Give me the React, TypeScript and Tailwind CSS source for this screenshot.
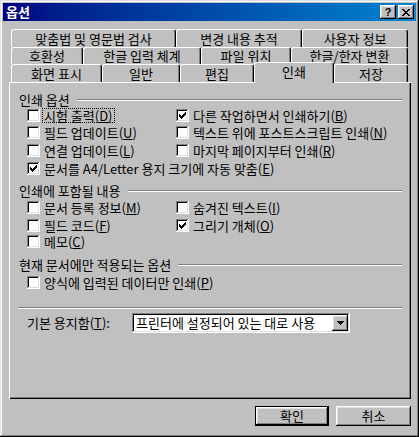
import React from "react"

const raised =
  "shadow-[inset_-1px_-1px_0_#000,inset_1px_1px_0_#fff,inset_-2px_-2px_0_#808080,inset_2px_2px_0_#dfdfdf]"
const sunken =
  "shadow-[inset_-1px_-1px_0_#fff,inset_1px_1px_0_#808080,inset_-2px_-2px_0_#dfdfdf,inset_2px_2px_0_#000]"

function CheckMark() {
  return (
    <svg width="7" height="7" viewBox="0 0 7 7" shapeRendering="crispEdges">
      <path
        d="M6 0h1v1h-1z M5 1h2v1h-2z M0 2h1v1h-1z M4 2h3v1h-3z M0 3h2v1h-2z M3 3h3v1h-3z M0 4h5v1h-5z M1 5h3v1h-3z M2 6h1v1h-1z"
        fill="#000"
      />
    </svg>
  )
}

function Box({ checked }: { checked?: boolean }) {
  return (
    <div className={`w-[13px] h-[13px] shrink-0 bg-white flex items-center justify-center ${sunken}`}>
      {checked && <CheckMark />}
    </div>
  )
}

// mnemonic letter
function M({ c }: { c: string }) {
  return <span className="underline underline-offset-[1px]">{c}</span>
}

function Option({
  checked,
  focus,
  children
}: {
  checked?: boolean
  focus?: boolean
  children: React.ReactNode
}) {
  return (
    <div className="flex items-center h-[13px]">
      <Box checked={checked} />
      <span
        className={`ml-[2px] px-[1px] h-[15px] leading-[13px] whitespace-nowrap border ${
          focus ? "border-dotted border-black" : "border-transparent"
        }`}
      >
        {children}
      </span>
    </div>
  )
}

function Group({ title }: { title: string }) {
  return (
    <div className="flex items-center h-[14px]">
      <span className="whitespace-nowrap leading-[14px]">{title}</span>
      <div className="flex-1 ml-[7px] h-[2px] border-t border-t-[#808080] border-b border-b-white" />
    </div>
  )
}

const tabBase =
  "h-[18px] shrink-0 flex items-center justify-center whitespace-nowrap border-l border-t border-r border-l-white border-t-white border-r-black rounded-t-[3px] shadow-[inset_-1px_0_0_#808080]"

export default function App() {
  return (
    <div className="w-[419px] h-[437px] bg-[#c0c0c0] p-[3px] flex flex-col text-[13px] text-black font-['Noto_Sans_CJK_KR','Noto_Sans',sans-serif] shadow-[inset_-1px_-1px_0_#000,inset_1px_1px_0_#dfdfdf,inset_-2px_-2px_0_#808080,inset_2px_2px_0_#fff]">

      {/* Title bar */}

      <div className="h-[18px] flex items-center pl-[3px] pr-[2px] bg-linear-to-r from-[#000080] to-[#1084d0]">
        <span className="text-white font-bold">옵션</span>
        <div className="ml-auto flex gap-[2px]">
          <div className={`w-[16px] h-[14px] bg-[#c0c0c0] flex items-center justify-center ${raised}`}>
            <span className="font-bold text-[11px] leading-none font-['Liberation_Sans',sans-serif]">?</span>
          </div>
          <div className={`w-[16px] h-[14px] bg-[#c0c0c0] flex items-center justify-center ${raised}`}>
            <svg width="8" height="7" viewBox="0 0 8 7" shapeRendering="crispEdges">
              <path
                d="M0 0h2v1h-2z M6 0h2v1h-2z M1 1h2v1h-2z M5 1h2v1h-2z M2 2h4v1h-4z M3 3h2v1h-2z M2 4h4v1h-4z M1 5h2v1h-2z M5 5h2v1h-2z M0 6h2v1h-2z M6 6h2v1h-2z"
                fill="#000"
              />
            </svg>
          </div>
        </div>
      </div>

      {/* Body */}

      <div className="pl-[6px] pr-[5px] pt-[8px]">

        {/* Tabs */}

        <div className="pl-[2px] pr-[3px] flex flex-col">
          <div className="flex">
            <div className={`${tabBase} w-[165px]`}>맞춤법 및 영문법 검사</div>
            <div className={`${tabBase} w-[126px]`}>변경 내용 추적</div>
            <div className={`${tabBase} w-[106px]`}>사용자 정보</div>
          </div>
          <div className="flex">
            <div className={`${tabBase} !h-[17px] w-[72px]`}>호환성</div>
            <div className={`${tabBase} !h-[17px] w-[118px]`}>한글 입력 체계</div>
            <div className={`${tabBase} !h-[17px] w-[90px]`}>파일 위치</div>
            <div className={`${tabBase} !h-[17px] w-[117px]`}>한글/한자 변환</div>
          </div>
          <div className="flex items-end">
            <div className={`${tabBase} w-[91px]`}>화면 표시</div>
            <div className={`${tabBase} w-[78px]`}>일반</div>
            <div className={`${tabBase} w-[74px]`}>편집</div>
            <div className={`${tabBase} relative z-10 bg-[#c0c0c0] !h-[21px] -mt-[2px] -mb-[1px] pb-[2px] w-[80px]`}>인쇄</div>
            <div className={`${tabBase} w-[74px]`}>저장</div>
          </div>
        </div>

        {/* Panel */}

        <div className="h-[317px] pl-[10px] pr-[9px] pt-[11px] flex flex-col shadow-[inset_1px_1px_0_#fff,inset_-1px_-1px_0_#000,inset_-2px_-2px_0_#808080]">

          <Group title="인쇄 옵션" />

          <div className="pl-[8px] flex flex-col">
            <div className="h-[17px] pt-[2px] flex">
              <div className="w-[149px]">
                <Option focus>시험 출력(<M c="D" />)</Option>
              </div>
              <Option checked>다른 작업하면서 인쇄하기(<M c="B" />)</Option>
            </div>
            <div className="h-[18px] pt-[2px] flex">
              <div className="w-[149px]">
                <Option>필드 업데이트(<M c="U" />)</Option>
              </div>
              <Option>텍스트 위에 포스트스크립트 인쇄(<M c="N" />)</Option>
            </div>
            <div className="h-[18px] pt-[2px] flex">
              <div className="w-[149px]">
                <Option>연결 업데이트(<M c="L" />)</Option>
              </div>
              <Option>마지막 페이지부터 인쇄(<M c="R" />)</Option>
            </div>
            <div className="h-[18px] pt-[2px] flex">
              <Option checked>문서를 A4/Letter 용지 크기에 자동 맞춤(<M c="E" />)</Option>
            </div>
          </div>

          <div className="mt-[6px]">
            <Group title="인쇄에 포함될 내용" />
          </div>

          <div className="pl-[8px] flex flex-col">
            <div className="h-[18px] pt-[3px] flex">
              <div className="w-[149px]">
                <Option>문서 등록 정보(<M c="M" />)</Option>
              </div>
              <Option>숨겨진 텍스트(<M c="I" />)</Option>
            </div>
            <div className="h-[17px] pt-[3px] flex">
              <div className="w-[149px]">
                <Option>필드 코드(<M c="F" />)</Option>
              </div>
              <Option checked>그리기 개체(<M c="O" />)</Option>
            </div>
            <div className="h-[18px] pt-[2px] flex">
              <Option>메모(<M c="C" />)</Option>
            </div>
          </div>

          <div className="mt-[7px]">
            <Group title="현재 문서에만 적용되는 옵션" />
          </div>

          <div className="pl-[8px] h-[18px] pt-[4px] flex">
            <Option>양식에 입력된 데이터만 인쇄(<M c="P" />)</Option>
          </div>

          {/* Separator */}

          <div className="mt-[17px] -ml-[1px] h-[2px] border-t border-t-[#808080] border-b border-b-white" />

          <div className="mt-[4px] pl-[8px] flex items-center">
            <span className="w-[105px] whitespace-nowrap">
              기본 용지함(<M c="T" />):
            </span>
            <div className={`w-[218px] h-[20px] bg-white flex items-center p-[2px] ${sunken}`}>
              <span className="flex-1 pl-[2px] whitespace-nowrap">프린터에 설정되어 있는 대로 사용</span>
              <div className={`w-[16px] h-[16px] bg-[#c0c0c0] flex items-center justify-center ${raised}`}>
                <svg width="7" height="4" viewBox="0 0 7 4" shapeRendering="crispEdges">
                  <path d="M0 0h7v1h-7z M1 1h5v1h-5z M2 2h3v1h-3z M3 3h1v1h-1z" fill="#000" />
                </svg>
              </div>
            </div>
          </div>

        </div>
      </div>

      {/* Buttons */}

      <div className="mt-[7px] pr-[5px] flex justify-end gap-[7px]">
        <div className="w-[74px] h-[20px] border border-black">
          <div className={`w-full h-full flex items-center justify-center ${raised}`}>확인</div>
        </div>
        <div className={`w-[75px] h-[20px] flex items-center justify-center ${raised}`}>취소</div>
      </div>

    </div>
  )
}
